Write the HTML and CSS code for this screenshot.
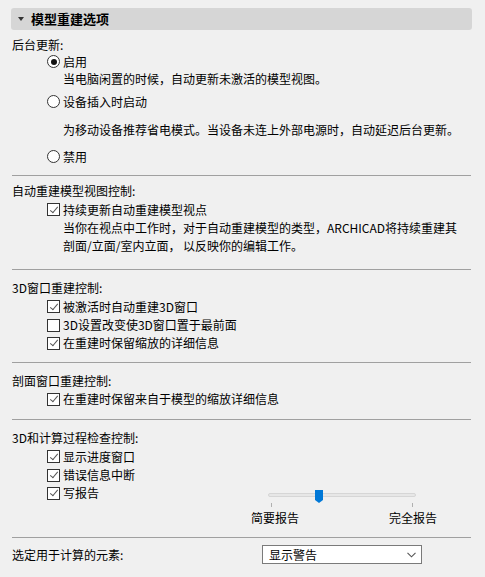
FILE: index.html
```html
<!DOCTYPE html>
<html lang="zh">
<head>
<meta charset="utf-8">
<link rel="stylesheet" href="styles.css">
</head>
<body>
<div class="header"><span class="tri"></span><span class="htitle">模型重建选项</span></div>

<div class="group g1">
  <div class="label r17">后台更新:</div>
  <div class="opt r17"><span class="radio on"></span>启用</div>
  <div class="desc r17">当电脑闲置的时候，自动更新未激活的模型视图。</div>
  <div class="opt r17 m6"><span class="radio"></span>设备插入时启动</div>
  <div class="desc r17 m11">为移动设备推荐省电模式。当设备未连上外部电源时，自动延迟后台更新。</div>
  <div class="opt r17 m10"><span class="radio"></span>禁用</div>
</div>
<div class="sep s10"></div>

<div class="group g2">
  <div class="label r19">自动重建模型视图控制:</div>
  <div class="opt r19"><span class="check on"></span>持续更新自动重建模型视点</div>
  <div class="desc r18">当你在视点中工作时，对于自动重建模型的类型，ARCHICAD将持续重建其</div>
  <div class="desc r18">剖面/立面/室内立面， 以反映你的编辑工作。</div>
</div>
<div class="sep s14"></div>

<div class="group g3">
  <div class="label r19">3D窗口重建控制:</div>
  <div class="opt r19"><span class="check on"></span>被激活时自动重建3D窗口</div>
  <div class="opt r18"><span class="check"></span>3D设置改变使3D窗口置于最前面</div>
  <div class="opt r18"><span class="check on"></span>在重建时保留缩放的详细信息</div>
</div>
<div class="sep s10"></div>

<div class="group g4">
  <div class="label r18">剖面窗口重建控制:</div>
  <div class="opt r18"><span class="check on"></span>在重建时保留来自于模型的缩放详细信息</div>
</div>
<div class="sep s11"></div>

<div class="group g5">
  <div class="label r18">3D和计算过程检查控制:</div>
  <div class="split">
    <div class="checks">
      <div class="opt r19"><span class="check on"></span>显示进度窗口</div>
      <div class="opt r18"><span class="check on"></span>错误信息中断</div>
      <div class="opt r18"><span class="check on"></span>写报告</div>
    </div>
    <div class="slider">
      <div class="track-area">
        <div class="track"></div>
        <svg class="thumb" width="8" height="13" viewBox="0 0 8 13"><path d="M0 0H8V10L4 13L0 10Z" fill="#0078d7"/></svg>
        <span class="tick t1"></span>
        <span class="tick t2"></span>
      </div>
      <div class="slabels"><span>简要报告</span><span>完全报告</span></div>
    </div>
  </div>
</div>
<div class="sep s9"></div>

<div class="lastrow">
  <span class="label">选定用于计算的元素:</span>
  <div class="select"><span>显示警告</span>
    <svg width="9" height="6" viewBox="0 0 9 6"><path d="M0.5 0.8L4.5 4.8L8.5 0.8" fill="none" stroke="#555" stroke-width="1.1"/></svg>
  </div>
</div>
</body>
</html>
```

FILE: styles.css
```css
html, body {
  margin: 0;
  padding: 0;
}
body {
  width: 485px;
  height: 577px;
  background: #f0f0f0;
  font-family: "Noto Sans CJK SC", "Microsoft YaHei", sans-serif;
  font-size: 12px;
  color: #000;
  overflow: hidden;
}
.header {
  margin: 8px 13px 0 11px;
  height: 22px;
  background: #d6d6d6;
  border-radius: 3px;
  display: flex;
  align-items: center;
}
.tri {
  width: 0;
  height: 0;
  margin-left: 7px;
  border-left: 3.5px solid transparent;
  border-right: 3.5px solid transparent;
  border-top: 4px solid #333;
}
.htitle {
  margin-left: 7px;
  font-weight: bold;
  font-size: 13px;
  line-height: 22px;
}
.group {
  padding: 0 14px 0 12px;
}
.g1 { padding-top: 6px; }
.g2 { padding-top: 5px; }
.g3 { padding-top: 8px; }
.g4 { padding-top: 9px; }
.g5 { padding-top: 9px; }
.r17 { height: 17px; line-height: 17px; }
.r18 { height: 18px; line-height: 18px; }
.r19 { height: 19px; line-height: 19px; }
.m6 { margin-top: 6px; }
.m10 { margin-top: 10px; }
.m11 { margin-top: 11px; }
.label { white-space: nowrap; }
.opt {
  display: flex;
  align-items: center;
  padding-left: 35px;
  white-space: nowrap;
}
.desc {
  padding-left: 51px;
  white-space: nowrap;
}
.radio {
  width: 11px;
  height: 11px;
  border: 1px solid #333;
  border-radius: 50%;
  background: #fff;
  margin-right: 3px;
  flex: none;
  position: relative;
}
.radio.on::after {
  content: "";
  position: absolute;
  left: 2.5px;
  top: 2.5px;
  width: 6px;
  height: 6px;
  border-radius: 50%;
  background: #111;
}
.check {
  width: 11px;
  height: 11px;
  border: 1px solid #333;
  background: #fff;
  margin-right: 3px;
  flex: none;
  position: relative;
}
.check.on::after {
  content: "";
  position: absolute;
  left: 3.5px;
  top: 0.5px;
  width: 3px;
  height: 7px;
  border-right: 1px solid #555;
  border-bottom: 1px solid #555;
  transform: rotate(40deg);
}
.sep {
  height: 1px;
  background: #a0a0a0;
  margin: 0 14px 0 12px;
}
.s9 { margin-top: 9px; }
.s10 { margin-top: 10px; }
.s11 { margin-top: 11px; }
.s14 { margin-top: 14px; }
.split {
  display: flex;
}
.checks {
  width: 239px;
}
.slider {
  margin-top: 43px;
  width: 186px;
}
.track-area {
  position: relative;
  height: 18px;
}
.track {
  position: absolute;
  left: 17px;
  top: 3px;
  width: 146px;
  height: 2px;
  background: #e7e7e7;
  border: 1px solid #d6d6d6;
  border-radius: 2px;
}
.thumb {
  position: absolute;
  left: 64px;
  top: 0;
}
.tick {
  position: absolute;
  top: 13px;
  width: 1px;
  height: 4px;
  background: #b0b0b0;
}
.t1 { left: 20px; }
.t2 { left: 161px; }
.slabels {
  display: flex;
  justify-content: space-between;
  height: 20px;
  line-height: 20px;
}
.lastrow {
  display: flex;
  align-items: center;
  padding: 7px 14px 0 12px;
  height: 19px;
}
.lastrow .label {
  width: 250px;
  flex: none;
}
.select {
  width: 147px;
  height: 17px;
  border: 1px solid #7a7a7a;
  background: #fff;
  display: flex;
  align-items: center;
  justify-content: space-between;
  padding: 0 5px 0 6px;
  line-height: 17px;
  flex: none;
}
.select span,
.select svg {
  flex: none;
}
```
